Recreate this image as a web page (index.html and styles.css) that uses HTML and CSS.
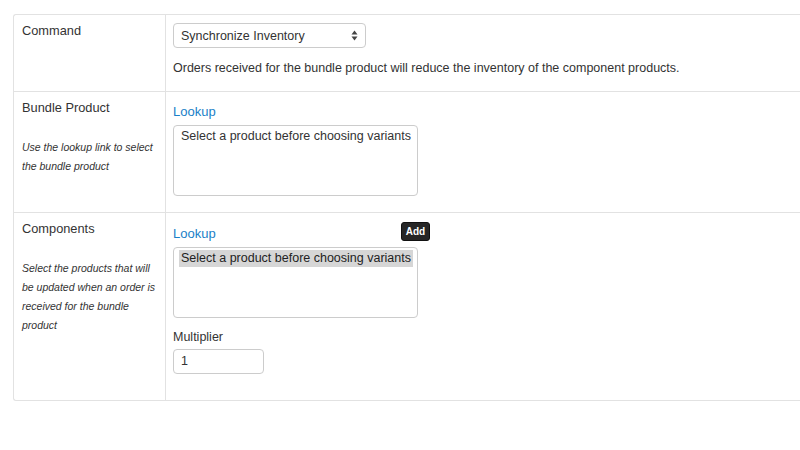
FILE: index.html
```html
<!DOCTYPE html>
<html>
<head>
<meta charset="utf-8">
<link rel="stylesheet" href="styles.css">
</head>
<body>
<div class="page">
  <div class="form-table">
    <div class="row row-command">
      <div class="label-cell">
        <div class="label">Command</div>
      </div>
      <div class="field-cell">
        <div class="select">
          <span>Synchronize Inventory</span>
          <svg class="arrows" width="7" height="11" viewBox="0 0 7 11"><path d="M3.5 0.5 L6.5 4.5 L0.5 4.5 Z M3.5 10.5 L6.5 6.5 L0.5 6.5 Z" fill="#444"/></svg>
        </div>
        <p class="desc">Orders received for the bundle product will reduce the inventory of the component products.</p>
      </div>
    </div>
    <div class="row row-bundle">
      <div class="label-cell">
        <div class="label">Bundle Product</div>
        <p class="help">Use the lookup link to select<br>the bundle product</p>
      </div>
      <div class="field-cell">
        <div class="lookup-line"><a class="lookup" href="#">Lookup</a></div>
        <div class="box"><span class="opt">Select a product before choosing variants</span></div>
      </div>
    </div>
    <div class="row row-components">
      <div class="label-cell">
        <div class="label">Components</div>
        <p class="help">Select the products that will<br>be updated when an order is<br>received for the bundle<br>product</p>
      </div>
      <div class="field-cell">
        <div class="lookup-line"><a class="lookup" href="#">Lookup</a><span class="add-btn">Add</span></div>
        <div class="box"><span class="opt selected">Select a product before choosing variants</span></div>
        <div class="mult-label">Multiplier</div>
        <div class="num-input">1</div>
      </div>
    </div>
  </div>
</div>
</body>
</html>
```

FILE: styles.css
```css
html, body {
  margin: 0;
  padding: 0;
  background: #fff;
}
body {
  font-family: "Liberation Sans", Arial, sans-serif;
  font-size: 12.5px;
  color: #333;
}
.page {
  padding: 14px 0 0 13px;
}
.form-table {
  border: 1px solid #e2e2e2;
  border-right: none;
  border-radius: 3px 0 0 3px;
  width: 790px;
}
.row {
  display: flex;
  border-top: 1px solid #e2e2e2;
}
.row:first-child {
  border-top: none;
}
.label-cell {
  width: 135px;
  flex: none;
  padding: 7px 8px 8px 8px;
  border-right: 1px solid #e2e2e2;
}
.field-cell {
  flex: 1;
  padding: 8px 7px 8px 7px;
}
.label {
  line-height: 18px;
  font-size: 12.8px;
}
.help {
  margin: 21px 0 0 0;
  font-size: 10.5px;
  font-style: italic;
  line-height: 19px;
  white-space: nowrap;
}
.row-command {
  height: 76px;
}
.row-bundle {
  height: 120px;
}
.row-components {
  height: 187px;
}
.select {
  width: 193px;
  height: 25px;
  box-sizing: border-box;
  border: 1px solid #ccc;
  border-radius: 4px;
  display: flex;
  align-items: center;
  justify-content: space-between;
  padding: 0 7px 0 7px;
  color: #333;
}
.desc {
  margin: 11px 0 0 0;
  line-height: 18px;
}
.lookup-line {
  width: 257px;
  display: flex;
  justify-content: space-between;
  align-items: center;
  height: 22px;
  margin-top: 2px;
}
.lookup {
  color: #1a7fc8;
  text-decoration: none;
  font-size: 13px;
  line-height: 18px;
}
.row-bundle .lookup-line {
  margin-top: 1px;
}
.add-btn {
  background: #262626;
  border: 1px solid #111;
  box-sizing: border-box;
  color: #fff;
  font-size: 10px;
  font-weight: bold;
  border-radius: 3px;
  height: 19px;
  width: 29px;
  display: flex;
  align-items: center;
  justify-content: center;
  margin-top: -6px;
}
.box {
  margin-top: 2px;
  width: 245px;
  height: 71px;
  box-sizing: border-box;
  border: 1px solid #ccc;
  border-radius: 4px;
  padding: 2px 5px;
}
.opt {
  display: inline-block;
  line-height: 17px;
  padding: 0 2px;
  color: #333;
  white-space: nowrap;
}
.opt.selected {
  background: #d6d6d6;
  color: #222;
}
.mult-label {
  margin-top: 10px;
  line-height: 18px;
}
.num-input {
  margin-top: 3px;
  width: 91px;
  height: 25px;
  box-sizing: border-box;
  border: 1px solid #ccc;
  border-radius: 4px;
  padding: 0 7px;
  line-height: 23px;
}
```
